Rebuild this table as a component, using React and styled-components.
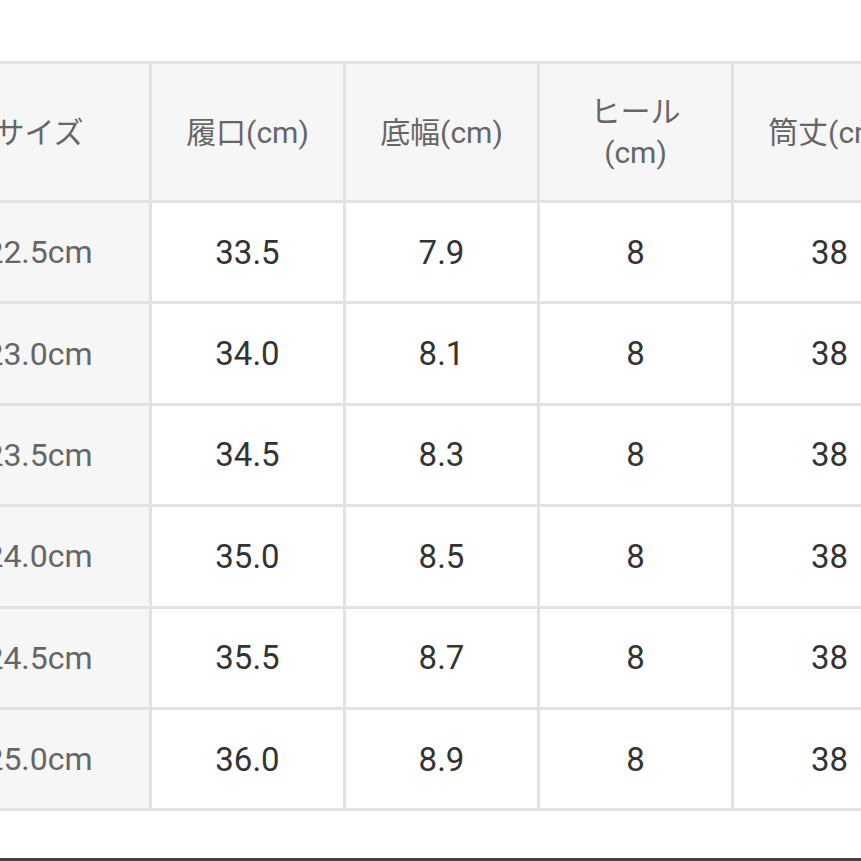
import React from "react";
import styled, { createGlobalStyle } from "styled-components";

const GlobalStyle = createGlobalStyle`
  html, body {
    margin: 0;
    padding: 0;
    background: #ffffff;
    overflow: hidden;
  }
  body {
    font-family: Roboto, "Noto Sans CJK JP", "Noto Sans", sans-serif;
  }
`;

const headers = ["サイズ", "履口(cm)", "底幅(cm)", "ヒール\n(cm)", "筒丈(cm)"];

const rows = [
  ["22.5cm", "33.5", "7.9", "8", "38"],
  ["23.0cm", "34.0", "8.1", "8", "38"],
  ["23.5cm", "34.5", "8.3", "8", "38"],
  ["24.0cm", "35.0", "8.5", "8", "38"],
  ["24.5cm", "35.5", "8.7", "8", "38"],
  ["25.0cm", "36.0", "8.9", "8", "38"],
];

const App = () => {
  return (
    <>
      <GlobalStyle />
      <Page>
        <SizeTable>
          {headers.map((h) => (
            <HeadCell key={h}>{h}</HeadCell>
          ))}
          {rows.map((row) =>
            row.map((value, i) =>
              i === 0 ? (
                <SizeCell key={row[0] + i}>{value}</SizeCell>
              ) : (
                <ValueCell key={row[0] + i}>{value}</ValueCell>
              )
            )
          )}
        </SizeTable>
        <Footer />
      </Page>
    </>
  );
};

export default App;

const Page = styled.div`
  width: 861px;
  height: 861px;
  padding-top: 61px;
  box-sizing: border-box;
  overflow: hidden;
  display: flex;
  flex-direction: column;
`;

const SizeTable = styled.div`
  display: grid;
  grid-template-columns: 220px repeat(4, 191px);
  grid-template-rows: 136px repeat(6, 98.4px);
  gap: 3px;
  padding: 3px;
  margin-left: -74px;
  width: max-content;
  background: #e2e2e2;
`;

const Cell = styled.div`
  display: flex;
  align-items: center;
  justify-content: center;
  text-align: center;
  white-space: pre-line;
`;

const HeadCell = styled(Cell)`
  background: #f6f6f6;
  color: #666666;
  font-size: 30px;
  line-height: 41px;
`;

const SizeCell = styled(Cell)`
  background: #f6f6f6;
  color: #666666;
  font-size: 32px;
`;

const ValueCell = styled(Cell)`
  background: #ffffff;
  color: #333333;
  font-size: 33px;
`;

const Footer = styled.div`
  margin-top: auto;
  height: 3px;
  background: #444444;
`;
